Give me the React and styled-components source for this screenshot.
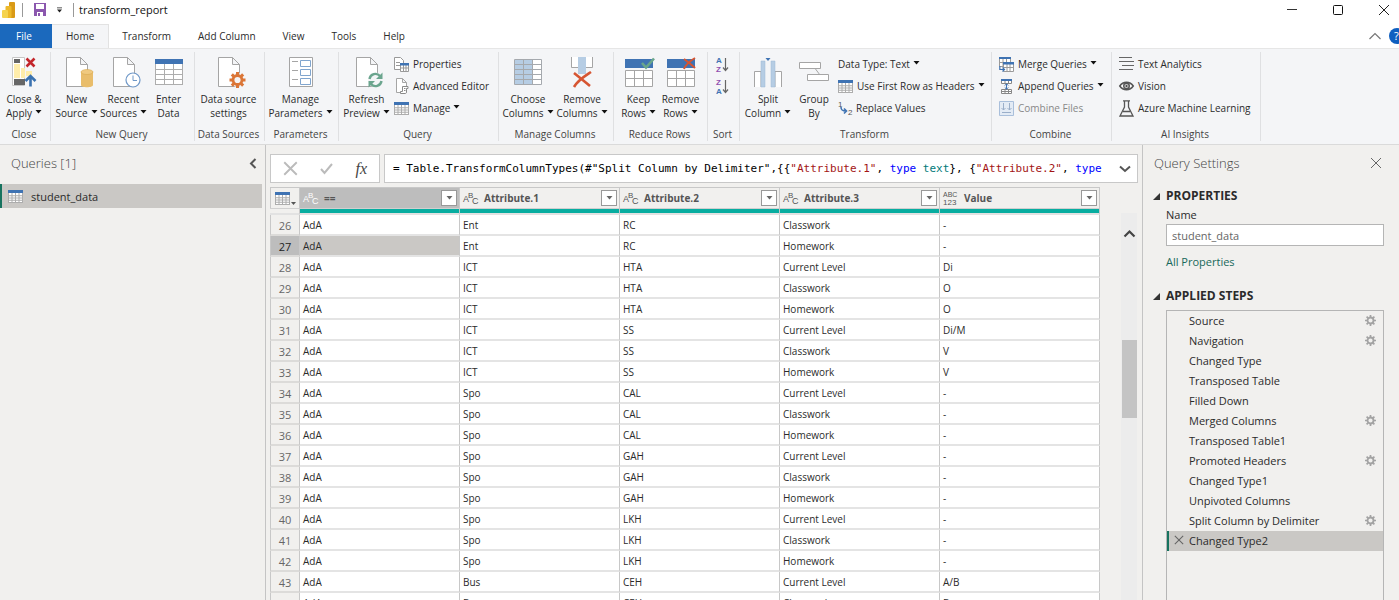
import React, { useState } from "react";
import styled, { createGlobalStyle } from "styled-components";

const GlobalStyle = createGlobalStyle`
  * {
    box-sizing: border-box;
  }
  body {
    margin: 0;
    background: #f1f0ee;
    color: #2b2b2b;
    font-family: "Open Sans", "Noto Sans", sans-serif;
    font-size: 11px;
  }
  button, input {
    font-family: inherit;
    font-size: inherit;
    color: inherit;
  }
  svg {
    display: block;
    flex: none;
    overflow: visible;
  }
`;

const Page = styled.div`
  height: 100vh;
  display: flex;
  flex-direction: column;
  overflow: hidden;
`;

const PlainButton = styled.button`
  display: flex;
  align-items: center;
  justify-content: center;
  padding: 0;
  border: 0;
  background: none;
`;

/* title bar */

const TitleBar = styled.header`
  display: flex;
  align-items: center;
  flex: none;
  height: 24px;
  padding: 0 9px 5px 2px;
  background: #fff;
`;

const Divider = styled.span`
  width: 1px;
  height: 14px;
  background: #999;
`;

const QuickAccess = styled.div`
  display: flex;
  align-items: center;
  gap: 11px;
  padding: 0 5px 0 6px;
`;

const FileName = styled.h1`
  flex: 1;
  margin: 0;
  font-size: 11px;
  font-weight: 400;
  color: #111;
`;

const WindowButtons = styled.div`
  display: flex;
  gap: 34px;
`;

/* tabs */

const TabBar = styled.nav`
  display: flex;
  flex: none;
  height: 24px;
  background: #fff;
  overflow: hidden;
  font-size: 10px;
`;

const Tab = styled.button`
  padding: 0 ${(p) => (p.$active ? 14 : 13)}px 2px;
  border: 0;
  border-right: 1px solid ${(p) => (p.$active ? "#e2e2e2" : "transparent")};
  border-top: 1px solid ${(p) => (p.$active ? "#e2e2e2" : "transparent")};
  background: ${(p) => (p.$active ? "#f4f5f7" : "#fff")};
`;

const FileTab = styled.button`
  width: 52px;
  padding: 0 4px 0 0;
  border: 0;
  background: #1b69bd;
  && {
    color: #fff;
  }
`;

const TabTools = styled.div`
  display: flex;
  align-items: center;
  gap: 8px;
  margin-left: auto;
  margin-right: -6px;
`;

/* ribbon */

const Ribbon = styled.div`
  display: flex;
  flex: none;
  height: 97px;
  padding: 3px 0;
  border-top: 1px solid #e6e6e6;
  border-bottom: 1px solid #dadada;
  background: #f4f5f7;
  font-size: 10px;
`;

const Group = styled.section`
  display: flex;
  flex-direction: column;
  flex: none;
  width: ${(p) => p.$width}px;
  border-right: 1px solid #dfe0e2;
`;

const GroupBody = styled.div`
  display: flex;
  flex: 1;
  justify-content: center;
  padding-right: 2px;
`;

const GroupName = styled.h2`
  margin: 0;
  padding-right: 2px;
  font-size: 10px;
  line-height: 14px;
  font-weight: 400;
  text-align: center;
  white-space: nowrap;
  color: #444;
`;

const BigButton = styled.button`
  display: flex;
  flex-direction: column;
  align-items: center;
  gap: 4px;
  width: ${(p) => p.$width}px;
  padding: 4px 0 0;
  border: 0;
  background: none;
  line-height: 14px;
  white-space: nowrap;
`;

const SmallList = styled.div`
  display: flex;
  flex-direction: column;
  flex: 1;
  padding-left: ${(p) => p.$pad || 0}px;
  padding-top: 1px;
`;

const SmallButton = styled.button`
  display: flex;
  align-items: center;
  gap: 4px;
  height: 22px;
  padding: 0;
  border: 0;
  background: none;
  white-space: nowrap;
  &:disabled {
    color: #888;
  }
`;

const SortList = styled.div`
  display: flex;
  flex-direction: column;
  align-items: center;
  gap: 3px;
  padding-top: 3px;
`;

const ArrowSvg = styled.svg`
  display: inline-block;
  margin-left: 3px;
  vertical-align: 3px;
`;

/* workspace */

const Workspace = styled.div`
  display: flex;
  flex: 1;
  min-height: 0;
`;

const QueriesPane = styled.aside`
  flex: none;
  width: 266px;
  border-right: 1px solid #c4c4c4;
`;

const PaneHeader = styled.div`
  display: flex;
  align-items: center;
  justify-content: space-between;
  height: 36px;
  padding: 0 ${(p) => p.$right || 8}px 0 11px;
`;

const PaneTitle = styled.h2`
  margin: 0;
  font-size: 13px;
  font-weight: 300;
  color: #444;
`;

const QueryItem = styled.button`
  display: flex;
  align-items: center;
  gap: 8px;
  width: 262px;
  height: 24px;
  margin-top: 3px;
  padding: 0 6px;
  border: 0;
  border-left: 2px solid #17735f;
  background: #cac8c5;
`;

const Center = styled.main`
  display: flex;
  flex-direction: column;
  flex: 1;
  min-width: 0;
  padding: 9px 4px 0;
`;

const FormulaBar = styled.div`
  display: flex;
  flex: none;
  gap: 4px;
  height: 29px;
`;

const FormulaButtons = styled.div`
  display: flex;
  align-items: center;
  justify-content: space-between;
  width: 110px;
  padding: 0 12px;
  border: 1px solid #c8c8c8;
  background: #fff;
`;

const FxLabel = styled.span`
  font: italic 16px "Liberation Serif", serif;
  color: #444;
`;

const FormulaBox = styled.div`
  display: flex;
  align-items: center;
  justify-content: space-between;
  flex: 1;
  min-width: 0;
  padding: 0 6px 0 8px;
  border: 1px solid #c8c8c8;
  background: #fff;
`;

const Formula = styled.code`
  overflow: hidden;
  white-space: pre;
  font-family: "DejaVu Sans Mono", "Liberation Mono", monospace;
  font-size: 11px;
  color: #000;
`;

const Token = styled.span`
  color: ${(p) => p.$color};
`;

const GridArea = styled.div`
  display: flex;
  flex: 1;
  justify-content: space-between;
  min-height: 0;
  margin-top: 4px;
  overflow: hidden;
`;

const Grid = styled.table`
  align-self: flex-start;
  flex: none;
  width: 830px;
  table-layout: fixed;
  border-collapse: separate;
  border-spacing: 0;
  font-size: 10px;

  th, td {
    border-right: 1px solid #c8c8c8;
  }
`;

const IndexCol = styled.col`
  width: 30px;
`;

const ColumnHead = styled.th`
  height: 21px;
  padding: 0;
  border-top: 1px solid #c8c8c8;
  background: ${(p) => (p.$selected ? "#bdbdbd" : "#f1f0ee")};
  color: #555;
  text-align: left;
`;

const HeadContent = styled.div`
  display: flex;
  align-items: center;
  gap: 6px;
  padding: 0 2px 0 3px;
`;

const ColumnName = styled.span`
  flex: 1;
`;

const CornerHead = styled.th`
  padding: 0;
  border-top: 1px solid #c8c8c8;
  border-left: 1px solid #c8c8c8;
`;

const CornerButton = styled(PlainButton)`
  gap: 1px;
  align-items: flex-end;
  margin-left: 4px;
`;

const FilterButton = styled(PlainButton)`
  width: 16px;
  height: 16px;
  border: 1px solid #999;
  background: #fff;
`;

const QualityCell = styled.td`
  height: 7px;
  padding: 0;
  border-top: 1px solid #d0d0d0;
  border-bottom: 2px solid #e2e2e2;
  background: ${(p) => (p.$empty ? "#f1f0ee" : "#08ada0")};
`;

const RowNumber = styled.th`
  height: 21px;
  padding: 2px 0 0;
  border-left: 1px solid #c8c8c8;
  border-bottom: 2px solid #dcdbd9;
  background: ${(p) => (p.$selected ? "#bdbdbd" : "#f1f0ee")};
  font-size: 11px;
  line-height: 17px;
  font-weight: 400;
  color: ${(p) => (p.$selected ? "#222" : "#666")};
`;

const Cell = styled.td`
  height: 21px;
  padding: 2px 0 0 3px;
  border-bottom: 2px solid #e4e4e4;
  background: ${(p) => (p.$selected ? "#cac8c5" : "#fff")};
  line-height: 17px;
`;

const ScrollTrack = styled.div`
  flex: none;
  width: 16px;
  margin-top: 26px;
  margin-right: 1px;
  padding: 16px 0 0 1px;
  background: #ececec;
`;

const ScrollThumb = styled.div`
  height: 78px;
  margin-top: 102px;
  background: #c4c4c4;
`;

/* settings */

const SettingsPane = styled.aside`
  display: flex;
  flex-direction: column;
  flex: none;
  width: 257px;
  border-left: 1px solid #c4c4c4;
`;

const SettingsBody = styled.div`
  display: flex;
  flex-direction: column;
  flex: 1;
  padding: 7px 15px 0 10px;
`;

const SectionTitle = styled.h3`
  display: flex;
  align-items: center;
  gap: 6px;
  margin: 0;
  font-size: 12px;
  line-height: 16px;
  font-weight: 700;
`;

const Indent = styled.div`
  display: flex;
  flex-direction: column;
  align-items: flex-start;
  padding-left: 13px;
`;

const FieldLabel = styled.label`
  margin-top: 3px;
  line-height: 16px;
`;

const NameInput = styled.input`
  width: 100%;
  height: 22px;
  margin-top: 1px;
  padding: 0 5px;
  border: 1px solid #b5b5b5;
  border-radius: 0;
  background: #fff;
  && {
    color: #666;
  }
`;

const PropertiesLink = styled.a`
  margin: 7px 0 18px;
  line-height: 17px;
  color: #17695a;
  text-decoration: none;
`;

const StepList = styled.ol`
  flex: 1;
  margin: 6px 0 0 13px;
  padding: 0;
  border: 1px solid #b5b5b5;
  border-bottom: 0;
  list-style: none;
`;

const Step = styled.li`
  display: flex;
  align-items: center;
  height: 20px;
  padding: 0 7px 2px 0;
  border-left: 2px solid ${(p) => (p.$selected ? "#17735f" : "transparent")};
  background: ${(p) => (p.$selected ? "#cac8c5" : "none")};
`;

const IconButton = styled(PlainButton)`
  width: 20px;
  height: 18px;
`;

const StepName = styled(PlainButton)`
  flex: 1;
  justify-content: flex-start;
`;

/* icons */

const Arrow = () => (
  <ArrowSvg width="7" height="4" viewBox="0 0 7 4">
    <path d="M.5 0h6L3.5 3.500z" fill="#111" />
  </ArrowSvg>
);

const Cross = ({ size, color = "#444", width = 1 }) => (
  <svg width={size} height={size} viewBox="0 0 12 12" fill="none" stroke={color} strokeWidth={width}>
    <path d="M1 1l10 10M11 1L1 11" />
  </svg>
);

const TableIcon = ({ width = 15, height = 13, cols = 4, rows = 4 }) => {
  const head = Math.round(height / 6) + 1;
  const w = (width - 1) / cols;
  const h = (height - head - 1) / rows;
  let d = "";
  for (let i = 0; i <= cols; i++) d += `M${0.5 + i * w} ${head}V${height}`;
  for (let i = 1; i <= rows; i++) d += `M0 ${head + 0.5 + i * h}H${width}`;
  return (
    <svg width={width} height={height} viewBox={`0 0 ${width} ${height}`}>
      <rect width={width} height={height} fill="#fff" />
      <path d={d} stroke="#adadad" strokeWidth="1" fill="none" />
      <rect width={width} height={head} fill="#3f73b3" />
    </svg>
  );
};

// page with a folded corner, shared by the document icons
const Sheet = () => (
  <path d="M.5.5h14l7 7v22H.5zM14.5.5v7h7" fill="#fff" stroke="#a5a5a5" />
);

const PowerBiIcon = () => (
  <svg width="14" height="17" viewBox="0 0 14 17">
    <rect x="7" y="1" width="6" height="16" rx="1" fill="#d99a17" />
    <rect x="3.5" y="5" width="6" height="12" rx="1" fill="#edb92a" />
    <rect x="0" y="9" width="6" height="8" rx="1" fill="#f5d34f" />
  </svg>
);

const SaveIcon = () => (
  <svg width="12" height="13" viewBox="0 0 12 13">
    <path d="M0 0h12v13H0z" fill="#8b57ae" />
    <path d="M2 1h8v5H2zM3 9h6v4H3z" fill="#fff" />
    <path d="M4 10h2v3H4z" fill="#8b57ae" />
  </svg>
);

const CloseApplyIcon = () => (
  <svg width="24" height="30" viewBox="0 0 24 30">
    <path d="M.5.500h12v28H.5z" fill="#fff" stroke="#c6c6c6" />
    <path d="M2 7h6v14H2zM9 11h4v10H9zM14 14h6v5h-6z" fill="#ffedab" />
    <path d="M2 2h6v4H2zM2 22h11v6H2z" fill="#666" />
    <path d="M14.500 1.500l8 8M22.500 1.500l-8 8" stroke="#c3262c" strokeWidth="2.500" />
    <path d="M18.500 29.500V19M13.500 24l5-5 5 5" stroke="#3b72b0" strokeWidth="2.600" fill="none" />
  </svg>
);

const NewSourceIcon = () => (
  <svg width="30" height="31" viewBox="-4 0 30 31">
    <Sheet />
    <path d="M15 15v13c0 3 12 3 12 0V15z" fill="#e9bd6b" />
    <ellipse cx="21" cy="15" rx="6" ry="2.5" fill="#f0c97f" stroke="#d9a94f" strokeWidth=".6" />
  </svg>
);

const RecentIcon = () => (
  <svg width="30" height="31" viewBox="-4 0 30 31">
    <Sheet />
    <circle cx="20" cy="23" r="7" fill="#fff" stroke="#6f98c8" strokeWidth="1.2" />
    <path d="M20 18.5v5h4" stroke="#6f98c8" fill="none" />
  </svg>
);

const teeth = (n, cx, cy, r1, r2) => {
  let d = "";
  for (let i = 0; i < n; i++) {
    const a = (i * 2 * Math.PI) / n;
    d += `M${cx + r1 * Math.cos(a)} ${cy + r1 * Math.sin(a)}L${cx + r2 * Math.cos(a)} ${cy + r2 * Math.sin(a)}`;
  }
  return d;
};

const SourceSettingsIcon = () => (
  <svg width="30" height="31" viewBox="-4 0 30 31">
    <Sheet />
    <circle cx="19.5" cy="23" r="7" fill="#f4f5f7" />
    <circle cx="19.5" cy="23" r="4.5" fill="none" stroke="#db7637" strokeWidth="2.8" />
    <path d={teeth(8, 19.5, 23, 5, 8)} stroke="#db7637" strokeWidth="3" />
  </svg>
);

const GearIcon = () => (
  <svg width="11" height="11" viewBox="0 0 11 11" fill="none" stroke="#a3a3a3">
    <circle cx="5.5" cy="5.5" r="3" strokeWidth="1.8" />
    <path d={teeth(8, 5.5, 5.5, 3.5, 5.5)} strokeWidth="1.7" />
  </svg>
);

const ParametersIcon = () => (
  <svg width="24" height="30" viewBox="0 0 24 30" fill="#fff">
    <path d="M.5.5h23v29H.5z" stroke="#a5a5a5" />
    <path d="M11.5 3.5h10v6h-10zM11.5 12.5h10v6h-10zM11.5 21.5h10v6h-10z" stroke="#80a5ce" />
    <path d="M3 4.5h6M3 13.5h6M3 22.5h6" stroke="#a5a5a5" />
  </svg>
);

const RefreshIcon = () => (
  <svg width="30" height="31" viewBox="-4 0 30 31">
    <Sheet />
    <circle cx="19.5" cy="23" r="7.5" fill="#f4f5f7" />
    <path d="M13.5 22a6 6 0 0 1 10.500-3M25.500 24a6 6 0 0 1-10.500 3" stroke="#6ba58e" strokeWidth="2.4" fill="none" />
    <path d="M26.500 15.500v6.500H20zM12.500 30.500V24H19z" fill="#6ba58e" />
  </svg>
);

const ChooseColumnsIcon = () => (
  <svg width="28" height="26" viewBox="0 0 28 26">
    <path d="M.5.5h27v25H.5z" fill="#fff" />
    <path d="M1 1h18v24H1z" fill="#b6cde4" />
    <path d="M.5.5h27v25H.5zM9.5 0v26M18.5 0v26M0 5.5h28M0 10.5h28M0 15.5h28M0 20.5h28" fill="none" stroke="#a5a9ae" />
  </svg>
);

const RemoveColumnsIcon = () => (
  <svg width="24" height="32" viewBox="0 0 24 32">
    <path d="M1.5 1v10.5h21V1" fill="#fff" stroke="#a5a5a5" />
    <path d="M8 1h8v17H8z" fill="#b6cde4" />
    <path d="M4 17c5 4 10 8 16 13M21 16C15 20 8 24 4 31" fill="none" stroke="#d65532" strokeWidth="2.6" />
  </svg>
);

const RowsIcon = ({ remove }) => (
  <svg width="28" height="31" viewBox="0 0 28 31">
    <path d="M0 2h28v9H0z" fill="#3f73b3" />
    <path d="M.5 13.5h27v16H.5zM9.5 13v17M18.5 13v17M0 21.5h28" fill="#fff" stroke="#a5a5a5" />
    {remove ? (
      <path d="M17 2c4 3 8 6 11 9M28 1c-5 3-9 6-11 11" stroke="#d65532" strokeWidth="2" fill="none" />
    ) : (
      <path d="M17 6l4 4.500 8-9" stroke="#69a68c" strokeWidth="2.6" fill="none" />
    )}
  </svg>
);

const SortIcon = ({ first, second }) => (
  <svg width="14" height="19" viewBox="0 0 14 19" fontFamily="Liberation Sans" fontSize="8" fontWeight="700">
    <text x="0" y="8" fill={first === "A" ? "#3f73b3" : "#9050b0"}>{first}</text>
    <text x="0" y="17" fill={second === "A" ? "#3f73b3" : "#9050b0"}>{second}</text>
    <path d="M9.5 3v12M7 12.5l2.5 3 2.500-3" fill="none" stroke="#666" strokeWidth="1.2" />
  </svg>
);

const SplitIcon = () => (
  <svg width="28" height="30" viewBox="0 0 28 30">
    <path d="M.5 30V14.5H7V30M21 30V14.5h6.500V30" fill="#fff" stroke="#a5a5a5" />
    <path d="M7 4h4v26H7zM17 4h4v26h-4z" fill="#b6cde4" stroke="#9fb9d6" strokeWidth=".5" />
    <path d="M11.5 1h5L14 4z" fill="#3f73b3" />
  </svg>
);

const GroupByIcon = () => (
  <svg width="30" height="22" viewBox="0 0 30 22" fill="#fff" stroke="#a5a5a5">
    <path d="M15 6l6 8" />
    <path d="M.5 1.5h21v6H.5zM8.5 13.5h21v6h-21z" />
  </svg>
);

const PropertiesIcon = () => (
  <svg width="15" height="15" viewBox="0 0 15 15">
    <path d="M.5.5h6l3 3v9h-9z" fill="#fff" stroke="#999" />
    <path d="M2 5.5h4M2 8.5h4" stroke="#999" />
    <path d="M6.5 7.5h8v7h-8zM9.5 8v7M12 8v7M6 11h9" fill="#fff" stroke="#999" />
    <path d="M6 6h9v2.5H6z" fill="#3f73b3" />
  </svg>
);

const EditorIcon = () => (
  <svg width="15" height="16" viewBox="0 0 15 16" fill="#fff" stroke="#8a8a8a">
    <path d="M2.5.5h6l4 4v10h-10zM8.5.5v4h4" stroke="#a5a5a5" />
    <path d="M8.5 8.5H14v2h-1.500V14c0 1-.5 1.500-1.500 1.500H6.500v-2h2z" />
    <path d="M10 10.5h1.500M10 12.5h1.500" />
  </svg>
);

const ReplaceIcon = () => (
  <svg width="14" height="15" viewBox="0 0 14 15" fontFamily="Liberation Sans">
    <text x="0" y="6" fontSize="8" fill="#555">1</text>
    <text x="10" y="14" fontSize="8" fill="#555">2</text>
    <path d="M3 6c0 3 1 4 5 4M6 7.5L8.5 10 6 12.5" stroke="#3f73b3" strokeWidth="1.6" fill="none" />
  </svg>
);

const MergeIcon = () => (
  <svg width="15" height="15" viewBox="0 0 15 15">
    <path d="M.5 1.5h11v8H.5zM4 2v8M7.5 2v8M0 5.5h11" fill="#fff" stroke="#9a9a9a" />
    <path d="M0 0h12v2H0z" fill="#3f73b3" />
    <path d="M4.5 6.5h10v8h-10zM8 7v7M11 7v7M4 10.5h10" fill="#fff" stroke="#9a9a9a" />
    <path d="M4 5h11v2.5H4z" fill="#3f73b3" />
    <path d="M.8 9v3.500H5M3.5 10.5l2 2-2 2" fill="none" stroke="#3f73b3" strokeWidth="1.2" />
  </svg>
);

const AppendIcon = () => (
  <svg width="15" height="15" viewBox="0 0 15 15">
    <path d="M2.5 1.5h10v3h-10zM6 2v3M9.5 2v3M2.5 10.5h10v4h-10zM6 10v5M9.5 10v5M2 12.5h11" fill="#fff" stroke="#888" />
    <path d="M2 0h11v2H2z" fill="#3f73b3" />
    <path d="M7.5 5v5M5.8 6.5l1.700-1.700 1.700 1.700M5.8 8.5l1.700 1.700 1.700-1.700" fill="none" stroke="#3f73b3" />
  </svg>
);

const CombineIcon = () => (
  <svg width="15" height="15" viewBox="0 0 15 15">
    <path d="M.5.5h14v14H.5z" fill="#e3ebf5" stroke="#a9bfdb" />
    <path d="M4.5 2v7M2.5 7l2 2 2-2M10.5 2v7M8.5 7l2 2 2-2M3 11.5h9" fill="none" stroke="#9aaec9" />
  </svg>
);

const TextIcon = () => (
  <svg width="15" height="14" viewBox="0 0 15 14">
    <path d="M0 .5h13M0 4.5h15M3 8.5h12M0 12.5h14" stroke="#666" />
  </svg>
);

const EyeIcon = () => (
  <svg width="15" height="10" viewBox="0 0 15 10">
    <path d="M.8 5C4 .2 11 .2 14.2 5 11 9.8 4 9.8.8 5z" fill="#fff" stroke="#555" strokeWidth="1.6" />
    <circle cx="7.5" cy="5" r="2.8" fill="#ccc" stroke="#555" strokeWidth="1.4" />
    <circle cx="7.5" cy="5" r="1" fill="#444" />
  </svg>
);

const FlaskIcon = () => (
  <svg width="15" height="17" viewBox="0 0 15 17">
    <path d="M4 .8h7M5.5 1v6L1 16h13L9.5 7V1M4 11.5h7" fill="none" stroke="#555" strokeWidth="1.3" />
  </svg>
);

const TextTypeIcon = ({ color }) => (
  <svg width="15" height="14" viewBox="0 0 15 14" fill={color} fontFamily="Liberation Sans">
    <text x="0" y="11" fontSize="9" fontWeight="400">A</text>
    <text x="5" y="7" fontSize="8" fontWeight="400">B</text>
    <text x="9" y="13" fontSize="9" fontWeight="400">C</text>
  </svg>
);

const AnyTypeIcon = () => (
  <svg width="15" height="14" viewBox="0 0 15 14" fill="#555" fontFamily="Liberation Sans">
    <text x="0" y="6" fontSize="7" fontWeight="400">ABC</text>
    <text x="0" y="14" fontSize="8" fontWeight="400">123</text>
  </svg>
);

const SectionArrow = () => (
  <svg width="7" height="7" viewBox="0 0 7 7">
    <path d="M7 0v7H0z" fill="#333" />
  </svg>
);

/* data */

const tabs = ["Home", "Transform", "Add Column", "View", "Tools", "Help"];

const columns = ["==", "Attribute.1", "Attribute.2", "Attribute.3", "Value"];

const rows = [
  [26, "Ent", "RC", "Classwork", "-"],
  [27, "Ent", "RC", "Homework", "-"],
  [28, "ICT", "HTA", "Current Level", "Di"],
  [29, "ICT", "HTA", "Classwork", "O"],
  [30, "ICT", "HTA", "Homework", "O"],
  [31, "ICT", "SS", "Current Level", "Di/M"],
  [32, "ICT", "SS", "Classwork", "V"],
  [33, "ICT", "SS", "Homework", "V"],
  [34, "Spo", "CAL", "Current Level", "-"],
  [35, "Spo", "CAL", "Classwork", "-"],
  [36, "Spo", "CAL", "Homework", "-"],
  [37, "Spo", "GAH", "Current Level", "-"],
  [38, "Spo", "GAH", "Classwork", "-"],
  [39, "Spo", "GAH", "Homework", "-"],
  [40, "Spo", "LKH", "Current Level", "-"],
  [41, "Spo", "LKH", "Classwork", "-"],
  [42, "Spo", "LKH", "Homework", "-"],
  [43, "Bus", "CEH", "Current Level", "A/B"],
  [44, "Bus", "CEH", "Classwork", "B"],
];

const steps = [
  { name: "Source", gear: true },
  { name: "Navigation", gear: true },
  { name: "Changed Type" },
  { name: "Transposed Table" },
  { name: "Filled Down" },
  { name: "Merged Columns", gear: true },
  { name: "Transposed Table1" },
  { name: "Promoted Headers", gear: true },
  { name: "Changed Type1" },
  { name: "Unpivoted Columns" },
  { name: "Split Column by Delimiter", gear: true },
  { name: "Changed Type2" },
];

const IconBox = styled.span`
  display: flex;
  align-items: center;
  justify-content: center;
  height: 32px;
`;

const Big = ({ icon, top, bottom, menu, width }) => (
  <BigButton $width={width}>
    <IconBox>{icon}</IconBox>
    <span>
      {top}
      <br />
      {bottom}
      {menu && <Arrow />}
    </span>
  </BigButton>
);

const Small = ({ icon, text, menu, disabled }) => (
  <SmallButton disabled={disabled}>
    {icon}
    <span>
      {text}
      {menu && <Arrow />}
    </span>
  </SmallButton>
);

const RibbonGroup = ({ name, width, children }) => (
  <Group $width={width}>
    <GroupBody>{children}</GroupBody>
    <GroupName>{name}</GroupName>
  </Group>
);

function HomeRibbon() {
  return (
    <Ribbon>
      <RibbonGroup name="Close" width={51}>
        <Big width={48} icon={<CloseApplyIcon />} top="Close &" bottom="Apply" menu />
      </RibbonGroup>
      <RibbonGroup name="New Query" width={144}>
        <Big width={46} icon={<NewSourceIcon />} top="New" bottom="Source" menu />
        <Big width={48} icon={<RecentIcon />} top="Recent" bottom="Sources" menu />
        <Big width={42} icon={<TableIcon width={28} height={26} cols={3} />} top="Enter" bottom="Data" />
      </RibbonGroup>
      <RibbonGroup name="Data Sources" width={70}>
        <Big width={64} icon={<SourceSettingsIcon />} top="Data source" bottom="settings" />
      </RibbonGroup>
      <RibbonGroup name="Parameters" width={74}>
        <Big width={68} icon={<ParametersIcon />} top="Manage" bottom="Parameters" menu />
      </RibbonGroup>
      <RibbonGroup name="Query" width={160}>
        <Big width={55} icon={<RefreshIcon />} top="Refresh" bottom="Preview" menu />
        <SmallList>
          <Small icon={<PropertiesIcon />} text="Properties" />
          <Small icon={<EditorIcon />} text="Advanced Editor" />
          <Small icon={<TableIcon />} text="Manage" menu />
        </SmallList>
      </RibbonGroup>
      <RibbonGroup name="Manage Columns" width={115}>
        <Big width={54} icon={<ChooseColumnsIcon />} top="Choose" bottom="Columns" menu />
        <Big width={54} icon={<RemoveColumnsIcon />} top="Remove" bottom="Columns" menu />
      </RibbonGroup>
      <RibbonGroup name="Reduce Rows" width={94}>
        <Big width={42} icon={<RowsIcon />} top="Keep" bottom="Rows" menu />
        <Big width={42} icon={<RowsIcon remove />} top="Remove" bottom="Rows" menu />
      </RibbonGroup>
      <RibbonGroup name="Sort" width={32}>
        <SortList>
          <PlainButton aria-label="Sort ascending">
            <SortIcon first="A" second="Z" />
          </PlainButton>
          <PlainButton aria-label="Sort descending">
            <SortIcon first="Z" second="A" />
          </PlainButton>
        </SortList>
      </RibbonGroup>
      <RibbonGroup name="Transform" width={252}>
        <Big width={56} icon={<SplitIcon />} top="Split" bottom="Column" menu />
        <Big width={36} icon={<GroupByIcon />} top="Group" bottom="By" />
        <SmallList $pad={6}>
          <Small text="Data Type: Text" menu />
          <Small icon={<TableIcon />} text="Use First Row as Headers" menu />
          <Small icon={<ReplaceIcon />} text="Replace Values" />
        </SmallList>
      </RibbonGroup>
      <RibbonGroup name="Combine" width={120}>
        <SmallList $pad={7}>
          <Small icon={<MergeIcon />} text="Merge Queries" menu />
          <Small icon={<AppendIcon />} text="Append Queries" menu />
          <Small icon={<CombineIcon />} text="Combine Files" disabled />
        </SmallList>
      </RibbonGroup>
      <RibbonGroup name="AI Insights" width={149}>
        <SmallList $pad={7}>
          <Small icon={<TextIcon />} text="Text Analytics" />
          <Small icon={<EyeIcon />} text="Vision" />
          <Small icon={<FlaskIcon />} text="Azure Machine Learning" />
        </SmallList>
      </RibbonGroup>
    </Ribbon>
  );
}

function DataGrid() {
  const selectedRow = 27;
  return (
    <Grid>
      <colgroup>
        <IndexCol />
        {columns.map((c) => (
          <col key={c} />
        ))}
      </colgroup>
      <thead>
        <tr>
          <CornerHead>
            <CornerButton aria-label="Table options">
              <TableIcon />
              <svg width="5" height="3" viewBox="0 0 5 3">
                <path d="M0 0h5L2.5 3z" fill="#555" />
              </svg>
            </CornerButton>
          </CornerHead>
          {columns.map((c, i) => (
            <ColumnHead key={c} $selected={i === 0}>
              <HeadContent>
                {c === "Value" ? <AnyTypeIcon /> : <TextTypeIcon color={i === 0 ? "#fff" : "#555"} />}
                <ColumnName>{c}</ColumnName>
                <FilterButton aria-label={"Filter " + c}>
                  <svg width="7" height="4" viewBox="0 0 7 4">
                    <path d="M.5 0h6L3.5 3.500z" fill="#666" />
                  </svg>
                </FilterButton>
              </HeadContent>
            </ColumnHead>
          ))}
        </tr>
        <tr>
          <QualityCell $empty />
          {columns.map((c) => (
            <QualityCell key={c} />
          ))}
        </tr>
      </thead>
      <tbody>
        {rows.map(([n, ...values]) => (
          <tr key={n}>
            <RowNumber $selected={n === selectedRow}>{n}</RowNumber>
            <Cell $selected={n === selectedRow}>AdA</Cell>
            {values.map((v, i) => (
              <Cell key={i}>{v}</Cell>
            ))}
          </tr>
        ))}
      </tbody>
    </Grid>
  );
}

function QuerySettings() {
  const [name, setName] = useState("student_data");
  return (
    <SettingsPane>
      <PaneHeader $right={13}>
        <PaneTitle>Query Settings</PaneTitle>
        <IconButton aria-label="Close settings">
          <Cross size={12} color="#666" />
        </IconButton>
      </PaneHeader>
      <SettingsBody>
        <SectionTitle>
          <SectionArrow />
          PROPERTIES
        </SectionTitle>
        <Indent>
          <FieldLabel htmlFor="query-name">Name</FieldLabel>
          <NameInput id="query-name" value={name} onChange={(e) => setName(e.target.value)} />
          <PropertiesLink href="#properties">All Properties</PropertiesLink>
        </Indent>
        <SectionTitle>
          <SectionArrow />
          APPLIED STEPS
        </SectionTitle>
        <StepList>
          {steps.map((step, i) => {
            const selected = i === steps.length - 1;
            return (
              <Step key={step.name} $selected={selected}>
                <IconButton aria-label={"Delete " + step.name}>
                  {selected && <Cross size={10} color="#666" width={1.3} />}
                </IconButton>
                <StepName>{step.name}</StepName>
                {step.gear && (
                  <PlainButton aria-label={"Edit " + step.name}>
                    <GearIcon />
                  </PlainButton>
                )}
              </Step>
            );
          })}
        </StepList>
      </SettingsBody>
    </SettingsPane>
  );
}

export default function App() {
  return (
    <Page>
      <GlobalStyle />
      <TitleBar>
        <PowerBiIcon />
        <QuickAccess>
          <Divider />
          <PlainButton aria-label="Save">
            <SaveIcon />
          </PlainButton>
          <PlainButton aria-label="Customize toolbar">
            <svg width="5" height="6" viewBox="0 0 6 6">
              <path d="M0 0h6v1H0zM0 2.5h6L3 6z" fill="#222" />
            </svg>
          </PlainButton>
          <Divider />
        </QuickAccess>
        <FileName>transform_report</FileName>
        <WindowButtons>
          <PlainButton aria-label="Minimize">
            <svg width="12" height="12" viewBox="0 0 12 12">
              <path d="M1 5.5h10" stroke="#333" />
            </svg>
          </PlainButton>
          <PlainButton aria-label="Maximize">
            <svg width="12" height="12" viewBox="0 0 12 12">
              <rect x="1.5" y="1.5" width="9" height="9" rx="1" fill="none" stroke="#111" />
            </svg>
          </PlainButton>
          <PlainButton aria-label="Close">
            <Cross size={12} color="#222" />
          </PlainButton>
        </WindowButtons>
      </TitleBar>
      <TabBar>
        <FileTab>File</FileTab>
        {tabs.map((t) => (
          <Tab key={t} $active={t === "Home"}>
            {t}
          </Tab>
        ))}
        <TabTools>
          <PlainButton aria-label="Collapse ribbon">
            <svg width="12" height="8" viewBox="0 0 12 8">
              <path d="M.5 7L6 1.5 11.5 7" fill="none" stroke="#777" strokeWidth="1.2" />
            </svg>
          </PlainButton>
          <PlainButton aria-label="Help">
            <svg width="16" height="16" viewBox="0 0 16 16">
              <circle cx="8" cy="8" r="8" fill="#0f5fc0" />
              <text x="5" y="12" fontSize="11" fill="#fff">?</text>
            </svg>
          </PlainButton>
        </TabTools>
      </TabBar>
      <HomeRibbon />
      <Workspace>
        <QueriesPane>
          <PaneHeader>
            <PaneTitle>Queries [1]</PaneTitle>
            <PlainButton aria-label="Collapse queries">
              <svg width="8" height="11" viewBox="0 0 8 11">
                <path d="M6.5 1L2 5.5 6.5 10" fill="none" stroke="#555" strokeWidth="2" />
              </svg>
            </PlainButton>
          </PaneHeader>
          <QueryItem>
            <TableIcon />
            student_data
          </QueryItem>
        </QueriesPane>
        <Center>
          <FormulaBar>
            <FormulaButtons>
              <PlainButton aria-label="Cancel">
                <Cross size={15} color="#bbb" width={1.5} />
              </PlainButton>
              <PlainButton aria-label="Commit">
                <svg width="13" height="11" viewBox="0 0 13 11">
                  <path d="M1 6l3.500 4L12 1" fill="none" stroke="#bbb" strokeWidth="2" />
                </svg>
              </PlainButton>
              <PlainButton aria-label="Insert step">
                <FxLabel>fx</FxLabel>
              </PlainButton>
            </FormulaButtons>
            <FormulaBox>
              <Formula>
                {'= Table.TransformColumnTypes(#"Split Column by Delimiter",{{'}
                <Token $color="#a31515">"Attribute.1"</Token>
                {", "}
                <Token $color="#0000ff">type</Token> <Token $color="#007a7a">text</Token>
                {"}, {"}
                <Token $color="#a31515">"Attribute.2"</Token>
                {", "}
                <Token $color="#0000ff">type</Token>
              </Formula>
              <PlainButton aria-label="Expand formula">
                <svg width="12" height="8" viewBox="0 0 12 8">
                  <path d="M1 1.5l5 4.500 5-4.500" fill="none" stroke="#555" strokeWidth="2" />
                </svg>
              </PlainButton>
            </FormulaBox>
          </FormulaBar>
          <GridArea>
            <DataGrid />
            <ScrollTrack>
              <svg width="15" height="9" viewBox="0 0 15 9">
                <path d="M2.5 7.5l5-5 5 5" fill="none" stroke="#444" strokeWidth="2.2" />
              </svg>
              <ScrollThumb />
            </ScrollTrack>
          </GridArea>
        </Center>
        <QuerySettings />
      </Workspace>
    </Page>
  );
}
